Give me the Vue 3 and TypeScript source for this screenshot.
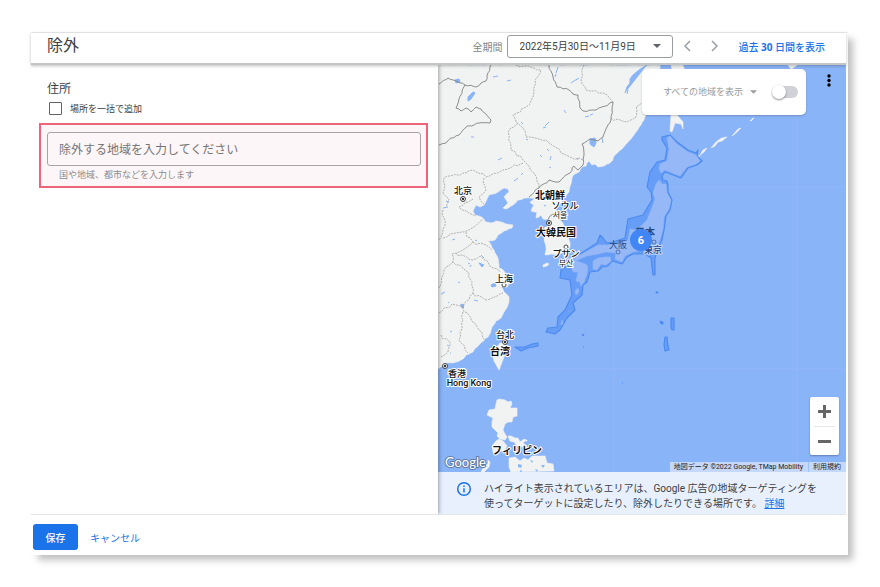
<script setup lang="ts">
import { ref } from 'vue'

interface MapLabel {
  text: string
  x: number
  y: number
  kind: 'country' | 'city' | 'small' | 'latin'
}

const bulkAdd = ref(false)
const showAll = ref(false)
const place = ref('')

const labels: MapLabel[] = [
  { text: '北京', x: 463, y: 194, kind: 'city' },
  { text: '北朝鮮', x: 550, y: 199, kind: 'country' },
  { text: 'ソウル', x: 565, y: 209, kind: 'city' },
  { text: '서울', x: 560, y: 218, kind: 'small' },
  { text: '大韓民国', x: 556, y: 236, kind: 'country' },
  { text: 'プサン', x: 566, y: 257, kind: 'city' },
  { text: '부산', x: 566, y: 266, kind: 'small' },
  { text: '上海', x: 504, y: 282, kind: 'city' },
  { text: '台北', x: 505, y: 338, kind: 'city' },
  { text: '台湾', x: 500, y: 355, kind: 'country' },
  { text: '香港', x: 457, y: 377, kind: 'city' },
  { text: 'Hong Kong', x: 469, y: 386, kind: 'latin' },
  { text: 'フィリピン', x: 517, y: 454, kind: 'country' },
]

const capitals = [[463, 199], [549, 223], [505, 342], [445, 366]]
const cities = [[566, 247], [504, 285]]

const lakes = [
  'M468 97l5-5 2 1-4 6-3 2z', 'M455 80l4-1 1 3-4 1z', 'M590 139l5-1 1 5-2 4-4-3z', 'M602 138l1 5',
  'M493 77l5-1', 'M507 81l4-1', 'M556 73l2-6M555 77l1-3', 'M571 83l6-4M576 80l3-2', 'M625 93l2-6 3-4 0-4 3-4 6-5 8-5',
  'M627 94l1-4M632 80l3-1', 'M545 126l4-4M543 128l3-1', 'M564 110l2 3', 'M585 117l4-1M590 115l3-1', 'M521 122l2 2',
  'M471 137l3 0', 'M526 139l2 1', 'M547 149l2 2M540 155l2 2', 'M550 160l1-4M549 168l2-1', 'M498 160l4-2', 'M577 158l1 2',
  'M514 181l4-3M521 175l2-2', 'M446 201l3 1M443 208l5-1', 'M479 263l5 2-2 2zM484 258l-3-3', 'M491 285l4-2 1 3-4 1z',
  'M461 304l3 1-1 3-2-1z', 'M441 294l4-2M448 302l1 1', 'M474 300l4 1M468 263l2 1', 'M450 332l2-1M447 345l2 1M450 353l1 0',
  'M452 240l3-1M475 240l2 1M458 282l2 1M470 267l1-2', 'M568 213l1 0M544 206l2-1',
]

const mainland =
  '438 65 660 65 655 85 649 100 646 115 641 125 636 132 630 140 622 149 615 155 611 162 604 166 598 167 595 164 592 165 589 161 586 166 581 168 579 172 575 174 572 178 571 184 569 192 564 198 560 204 556 209 558 215 562 222 567 232 569 240 570 247 566 253 558 254 551 254 545 255 546 247 544 240 546 233 544 228 549 225 548 219 543 219 541 215 536 218 537 212 531 211 534 205 530 202 535 198 526 198 518 200 513 205 506 209 503 208 508 203 504 197 509 192 508 189 504 188 498 192 489 195 487 199 484 205 480 207 476 205 473 211 475 215 483 218 486 222 491 223 496 221 506 224 513 225 512 228 504 231 498 235 495 240 488 241 491 245 494 250 498 258 499 268 504 271 508 277 507 281 509 284 507 287 501 287 504 292 509 297 508 305 504 312 501 318 496 321 491 330 488 337 479 345 473 352 466 355 463 359 456 362 446 363 442 366 438 369'

const provinces = [
  '516 65 525 66 541 70 535 80 533 97 526 107 513 115 516 122 523 128 526 137 546 140 561 153 570 157 583 160',
  '518 123 508 132 511 150 523 160 534 173 539 188',
  '523 163 503 170 486 177 473 170 444 178 443 193 449 199 446 207',
  '584 65 581 80 586 90 603 93 613 102',
  '611 118 626 122 636 117 636 107 643 102',
  '484 178 486 190 479 197 484 204',
  '473 199 459 207 469 213 476 216',
  '443 210 445 225 439 240',
  '443 238 456 233 469 230 483 219',
  '466 232 473 242 463 250 452 254 453 262 469 273 473 293 463 307 452 304 439 313',
  '456 253 473 260 480 256 493 268 500 272',
  '473 293 486 300 503 293',
  '463 307 479 330 485 340',
  '463 312 463 320 459 340 468 353',
  '441 335 450 342 448 352 441 357',
  '473 242 486 245 492 250',
  '453 262 444 270 439 288',
]

const borders = [
  '439 84 448 78 456 81 465 85 476 87 481 83 486 81 487 75 491 65',
  '465 85 459 99 456 108 461 111 466 108 471 112 476 107 481 109 491 120 490 123 479 123 466 127 459 135 451 138 446 143 439 145',
  '549 65 553 77 557 87 569 90 573 94 578 95 580 108 583 111 596 110 613 102 612 110 611 120 607 127 603 137 598 141 590 139 582 144 584 153 583 165 578 170 574 166 570 173 566 175 559 182 549 180 539 188 529 197',
  '548 221 550 216 560 212 563 221',
]

/* Breaks each straight run into short steps that wander around it, as a surveyed line does. */
function rugged(points: string, step: number, wander: number): string {
  const n = points.split(' ').map(Number)
  let seed = 7
  const next = () => {
    seed = (seed * 16807) % 2147483647
    return (seed / 2147483647 - 0.5) * 2 * wander
  }
  let d = `M${n[0]} ${n[1]}`
  for (let i = 2; i < n.length; i += 2) {
    const dx = n[i] - n[i - 2]
    const dy = n[i + 1] - n[i - 1]
    const parts = Math.max(1, Math.round(Math.hypot(dx, dy) / step))
    for (let p = 1; p <= parts; p++) {
      const j = p < parts ? next() : 0
      const k = p < parts ? next() : 0
      d += `L${(n[i - 2] + (dx * p) / parts + j).toFixed(1)} ${(n[i - 1] + (dy * p) / parts + k).toFixed(1)}`
    }
  }
  return d
}

const ranges = ['2022年5月30日～11月9日']
</script>

<template>
  <div class="page">
    <div class="sheet">
      <header class="top">
        <h1>除外</h1>
        <div class="period">
          <label for="range">全期間</label>
          <span class="select-box">
            <select id="range">
              <option v-for="r in ranges" :key="r">{{ r }}</option>
            </select>
            <svg class="caret" viewBox="0 0 8 4" aria-hidden="true"><path d="M0 0h8L4 4z" /></svg>
          </span>
          <button class="nav" type="button" aria-label="前へ">
            <svg viewBox="0 0 8 12"><path d="M7 1L2 6l5 5" /></svg>
          </button>
          <button class="nav next" type="button" aria-label="次へ">
            <svg viewBox="0 0 8 12"><path d="M1 1l5 5-5 5" /></svg>
          </button>
          <a class="recent" href="#">過去 <b>30</b> 日間を表示</a>
        </div>
      </header>

      <main class="body">
        <section class="form">
          <h2>住所</h2>
          <label class="bulk"><input v-model="bulkAdd" type="checkbox" />場所を一括で追加</label>
          <div class="callout">
            <input v-model="place" type="text" aria-label="除外する地域" aria-describedby="hint" placeholder="除外する地域を入力してください" />
            <p id="hint">国や地域、都市などを入力します</p>
          </div>
        </section>

        <section class="side">
          <div class="map">
            <svg class="canvas" viewBox="438 65 408 407" preserveAspectRatio="xMinYMin slice">
              <rect x="438" y="65" width="408" height="407" fill="#8ab4f8" />
              <g class="grid"><path d="M614 65V472M797 65V472M438 187H846M438 369H846" /></g>
              <g class="land">
                <path :d="rugged(mainland, 3, 0.6)" />
                <path d="M504 343L507 348 504 357 499 370 494 361 493 357 495 350 500 343z" />
                <path d="M671 65H683L686 75 682 90 679 105 677 115 683 122 683 129 681 124 675 123 672 132 670 131 671 115 674 100 676 85z" />
                <path d="M543 265l4-2 2 1-2 2-4 1zM788 65h9l-4 3-2 1z" />
                <path d="M699 157l4-7 4-2-3 4-4 3zM711 148l5-6 4-3 2-1 5-1-5 4-4 1-3 4zM732 136l6-7 3-1-5 5zM750 121l3-3 1 0-3 3z" />
                <path d="M497 400L499 399 505 400 508 402 511 401 512 404 510 408 517 408 517 416 513 417 512 422 508 422 505 424 503 430 505 434 507 437 505 440 500 439 497 436 498 433 495 430 492 427 492 422 493 418 487 415 489 410 495 409 496 404z" />
                <path d="M508 436l3 0 4 2 3 0 2 4 4-3 2 1-3 3 4 3-2 2-5-2-3 0-3-4-4-1zM525 440l2 0 0 1-2 0z" />
                <path d="M492 446l4-5 3-2 4 2 4 5-3 5-4 0-3 3-4-2z" />
                <path d="M509 458L515 457 520 461 524 458 528 460 532 456 545 456 547 463 553 464 554 471 511 472 509 467z" />
                <path d="M481 472l4-7 3-1 0-4 2 2-1 5-5 5z" />
              </g>
              <path class="inlets" d="M518 464l4 1-1 3-3-1zM530 460l3 1-1 2zM541 465l4 0-2 3zM535 469l3 1-1 2zM521 469l1 3-2 0z" />
              <g class="lakes"><path v-for="d in lakes" :key="d" :d="d" /></g>
              <g class="provinces"><path v-for="p in provinces" :key="p" :d="rugged(p, 4, 1.5)" /></g>
              <g class="borders"><path v-for="b in borders" :key="b" :d="rugged(b, 3, 0.8)" /></g>

              <g class="highlight">
                <path class="zone" d="M662 137L670 135 677 142 688 150 696 153 698 150 697 156 702 161 697 165 688 168 681 178 673 175 665 172 662 176 663 180 667 181 668 185 668 192 672 200 670 210 666 216 664 230 662 240 659 246 655 258 655 275 653 275 651 258 645 254 633 254 627 257 622 264 612 261 608 266 602 267 598 271 590 272 587 282 583 285 582 295 573 303 575 310 567 318 560 330 555 334 546 332 548 328 557 327 558 317 565 310 572 295 570 280 560 278 561 270 568 265 573 258 583 252 597 243 600 235 603 238 607 243 613 242 625 238 628 219 643 215 652 200 651 192 647 187 650 172 657 162 665 160 667 148 662 140z" />
                <path class="isle" d="M667 138L670 136 677 144 688 152 696 155 700 161 696 164 687 167 680 176 672 173 665 170 661 173 659 169 660 164 667 161 669 149z" />
                <path class="isle" d="M656 184L659 180 662 184 666 184 667 193 671 200 669 209 664 217 663 229 660 240 656 250 651 248 651 253 646 253 642 250 633 252 625 256 622 262 615 259 616 253 606 252 598 254 587 256 575 261 574 258 584 253 598 245 607 245 619 244 628 240 630 229 637 230 647 220 653 205 655 199 653 193z" />
                <path class="isle" d="M593 261l5-3 7-1 5 0 1 4-5 4-5-1-4 6-4-1zM570 262l7-1 8 3 3 2-1 8-3 8-3 4-1-4-4-1 2-9-5 0-2-6z" />
                <path class="isle" d="M575 291l3-3 1 4-3 3zM568 312l3-2M562 320l1 4-2 1z" />
                <path class="inner" d="M666 140L668 150M656 172l3-2M664 180l-1 2M598 256l5 1M589 262l-1 6M634 222l4-4" />
                <path class="zone" d="M515 347L525 347 532 344 538 343 538 346 528 348 521 351z" />
                <path class="zone" d="M671 318h3v12l-2 0-1-3zM665 337h2l1 9 1 4-4 1-1-6z" />
                <path class="dot-isles" d="M660 321l3 1 0 2-2 0zM656 292l2 0 0 1-2 0zM582 335l2-1-1 2zM583 347l1 0M622 383l1 0" />
                <g class="under-labels">
                  <text x="645" y="236" font-size="10" font-weight="700">日本</text>
                  <text x="618" y="248" font-size="9">大阪</text>
                  <text class="label city" x="653" y="253">東京</text>
                  <circle cx="618" cy="252" r="2" /><circle cx="654" cy="242" r="2" />
                </g>
              </g>

              <g class="dots">
                <g v-for="c in capitals" :key="c[0]">
                  <circle :cx="c[0]" :cy="c[1]" r="2.5" /><circle class="core" :cx="c[0]" :cy="c[1]" r="1.2" />
                </g>
                <circle v-for="c in cities" :key="c[0]" :cx="c[0]" :cy="c[1]" r="2" />
              </g>
              <text v-for="l in labels" :key="l.text" :x="l.x" :y="l.y" :class="['label', l.kind]">{{ l.text }}</text>
              <circle cx="641" cy="240" r="11" fill="#4285f4" />
              <text class="count" x="641" y="244">6</text>
              <text class="logo" x="445" y="467">Google</text>
            </svg>

            <div class="filter">
              <select aria-label="表示する地域">
                <option>すべての地域を表示</option>
              </select>
              <svg class="caret" viewBox="0 0 8 4" aria-hidden="true"><path d="M0 0h8L4 4z" /></svg>
              <input v-model="showAll" class="switch" type="checkbox" role="switch" aria-label="地域を表示" />
            </div>
            <button class="more" type="button" aria-label="その他">
              <svg viewBox="0 0 4 14"><circle cx="2" cy="2" r="1.7" /><circle cx="2" cy="6.5" r="1.7" /><circle cx="2" cy="11" r="1.7" /></svg>
            </button>
            <div class="zoom">
              <button type="button" aria-label="拡大"><svg viewBox="0 0 13 13"><path d="M6.5 0v13M0 6.5h13" /></svg></button>
              <button type="button" aria-label="縮小"><svg viewBox="0 0 13 13"><path d="M0 6.5h13" /></svg></button>
            </div>
            <div class="credit"><span>地図データ ©2022 Google, TMap Mobility</span><a href="#">利用規約</a></div>
          </div>

          <div class="info">
            <svg viewBox="0 0 16 16" aria-hidden="true">
              <circle cx="8" cy="8" r="6.3" /><path d="M8 7.2v4.3M8 4.4v1.6" />
            </svg>
            <p>ハイライト表示されているエリアは、Google 広告の地域ターゲティングを使ってターゲットに設定したり、除外したりできる場所です。 <a href="#">詳細</a></p>
          </div>
        </section>
      </main>

      <footer class="actions">
        <button class="save" type="button">保存</button>
        <button class="cancel" type="button">キャンセル</button>
      </footer>
    </div>
  </div>
</template>

<style>
body {
  background: #fff;
}
</style>

<style scoped>
* {
  box-sizing: border-box;
}
.page {
  display: flex;
  min-height: 100vh;
  padding: 32px 32px 32px 31px;
  font-family: Roboto, 'Noto Sans CJK JP', 'Noto Sans CJK KR', sans-serif;
  font-size: 10px;
  color: #3c4043;
}
button,
input,
select {
  margin: 0;
  padding: 0;
  border: 0;
  background: none;
  font: inherit;
  color: inherit;
  appearance: none;
}
h1,
h2,
p {
  margin: 0;
  font-weight: 400;
}
a {
  color: #1a73e8;
  text-decoration: none;
}
.sheet {
  flex: 1;
  display: flex;
  flex-direction: column;
  min-width: 0;
  padding-right: 2px;
  background: #fff;
  border-top: 1px solid #ececec;
  box-shadow: 6px 6px 7px -1px rgba(0, 0, 0, 0.25);
}
.top {
  position: relative;
  display: flex;
  align-items: center;
  justify-content: space-between;
  height: 32px;
  padding: 0 21px 4px 16px;
  border-bottom: 2px solid #c2c5c4;
  box-shadow: 0 1px 3px rgba(0, 0, 0, 0.25);
  z-index: 2;
}
h1 {
  font-size: 16px;
  line-height: 24px;
}
.period {
  display: flex;
  align-items: center;
}
.period label {
  color: #80868b;
  margin-right: 4px;
}
.select-box {
  display: flex;
  align-items: center;
  width: 166px;
  height: 23px;
  padding: 0 11px 0 12px;
  border: 1px solid #9a9da0;
  border-radius: 3px;
}
.select-box select {
  flex: 1;
  color: #3c4043;
}
.caret {
  width: 8px;
  height: 4px;
  fill: #5f6368;
}
.nav {
  display: flex;
  margin-left: 10px;
}
.nav.next {
  margin-left: 20px;
}
.nav svg {
  width: 8px;
  height: 12px;
  fill: none;
  stroke: #9aa0a6;
  stroke-width: 1.5;
}
.recent {
  margin-left: 20px;
  font-weight: 500;
}
.recent b {
  font-family: 'Open Sans', sans-serif;
  font-weight: 700;
}
.body {
  flex: 1;
  display: grid;
  grid-template-columns: 407fr 408fr;
}
.form {
  position: relative;
  z-index: 1;
  padding: 16px 10px 0 8px;
  background: #fff;
  box-shadow: 1px 0 4px rgba(0, 0, 0, 0.35);
  clip-path: inset(0 -6px 0 0);
}
h2 {
  padding-left: 8px;
  font-size: 12px;
  line-height: 16px;
}
.bulk {
  display: flex;
  align-items: center;
  gap: 8px;
  height: 16px;
  margin: 3px 0 7px 10px;
  font-size: 9px;
}
.bulk input {
  width: 13px;
  height: 13px;
  border: 1px solid #5f6368;
  border-radius: 1px;
}
.bulk input:checked {
  background: #1a73e8;
}
.callout {
  height: 65px;
  padding: 7px 5px 0 6px;
  border: 2px solid #ec6579;
  background: #fdf6f8;
}
.callout input {
  width: 100%;
  height: 34px;
  padding: 2px 11px 0;
  border: 1px solid #a8a3a5;
  border-radius: 3px;
  font-size: 12px;
}
.callout input::placeholder {
  color: #757575;
  opacity: 1;
}
.callout p {
  padding: 2px 12px 0;
  font-size: 9px;
  line-height: 14px;
  color: #8a8a8d;
}
.side {
  display: flex;
  flex-direction: column;
}
.map {
  position: relative;
  flex: 1;
  overflow: hidden;
  background: #8ab4f8;
}
.canvas {
  position: absolute;
  inset: 0;
  width: 100%;
  height: 100%;
}
.grid path {
  stroke: #93baf8;
  stroke-width: 0.6;
}
.land path {
  fill: #f1f2f2;
  stroke: #f1f2f2;
  stroke-width: 0.6;
  stroke-linejoin: round;
}
.inlets {
  fill: #8ab4f8;
}
.lakes path {
  fill: #8ab4f8;
  stroke: #8ab4f8;
  stroke-width: 1;
}
.provinces path {
  fill: none;
  stroke: #a0a0a0;
  stroke-width: 0.8;
  stroke-dasharray: 2 1;
}
.borders path {
  fill: none;
  stroke: #808080;
  stroke-width: 0.9;
}
.zone {
  fill: #669df6;
  stroke: #4d8bf1;
  stroke-width: 1.2;
  stroke-linejoin: round;
}
.dot-isles {
  fill: #4d8bf1;
  stroke: #4d8bf1;
  stroke-width: 1;
}
.isle {
  fill: #96b8f7;
  stroke: #96b8f7;
  stroke-width: 0.5;
  stroke-linejoin: round;
}
.inner {
  fill: none;
  stroke: #669df6;
}
.under-labels {
  fill: #27487f;
  text-anchor: middle;
}
.under-labels circle {
  fill: #9bbcf7;
  stroke: #3a5f9f;
  stroke-width: 0.8;
}
.dots circle {
  fill: #fff;
  stroke: #333;
  stroke-width: 0.9;
}
.dots .core {
  fill: #333;
  stroke: none;
}
.label {
  text-anchor: middle;
  fill: #111;
  stroke: #fff;
  stroke-width: 2px;
  stroke-linejoin: round;
  paint-order: stroke;
}
.under-labels .label {
  fill: #27487f;
  stroke: #c3d6fa;
}
.country {
  font-size: 10px;
  font-weight: 700;
}
.city {
  font-size: 9px;
  font-weight: 500;
}
.small {
  font-size: 8px;
}
.latin {
  font-size: 9px;
  font-weight: 500;
}
.count {
  fill: #fff;
  font-size: 11px;
  font-weight: 700;
  text-anchor: middle;
}
.logo {
  font-family: Lato, sans-serif;
  font-size: 13px;
  fill: #fff;
  stroke: #5f7aa6;
  stroke-width: 2px;
  stroke-linejoin: round;
  paint-order: stroke;
}
.filter {
  position: absolute;
  top: 4px;
  right: 40px;
  display: flex;
  align-items: center;
  width: 164px;
  height: 46px;
  padding: 0 8px 0 21px;
  border-radius: 5px;
  background: #fff;
  box-shadow: 0 1px 2px rgba(0, 0, 0, 0.2);
  font-size: 9px;
  color: #9a9a9a;
}
.filter select {
  width: 87px;
}
.filter .caret {
  width: 7px;
  fill: #9a9a9a;
}
.switch {
  position: relative;
  width: 25px;
  height: 12px;
  margin-left: auto;
  border-radius: 6px;
  background: #d0d2d7;
}
.switch::before {
  content: '';
  position: absolute;
  top: -1px;
  left: -1px;
  width: 14px;
  height: 14px;
  border-radius: 50%;
  background: #fff;
  box-shadow: 0 1px 2px rgba(0, 0, 0, 0.45);
}
.switch:checked::before {
  left: 12px;
}
.more {
  position: absolute;
  top: 9px;
  right: 15px;
  display: flex;
}
.more svg {
  width: 4px;
  height: 14px;
}
.zoom {
  position: absolute;
  right: 7px;
  bottom: 17px;
  width: 29px;
  padding: 0 4px;
  border-radius: 2px;
  background: #fff;
  box-shadow: 0 1px 2px rgba(0, 0, 0, 0.3);
}
.zoom button {
  display: flex;
  align-items: center;
  justify-content: center;
  width: 100%;
  height: 29px;
}
.zoom button + button {
  border-top: 1px solid #e6e6e6;
}
.zoom svg {
  width: 13px;
  height: 13px;
  stroke: #666;
  stroke-width: 3;
}
.credit {
  position: absolute;
  right: 0;
  bottom: 0;
  display: flex;
  height: 10px;
  font-size: 7px;
  line-height: 10px;
  white-space: nowrap;
  background: #c5d8fa;
}
.credit span,
.credit a {
  padding: 0 5px 0 4px;
  color: #222;
}
.credit a {
  border-left: 1px solid #9fc0f8;
}
.info {
  display: flex;
  gap: 12px;
  height: 42px;
  padding: 9px 24px 0 18px;
  background: #e8f0fe;
}
.info svg {
  flex: none;
  width: 16px;
  height: 16px;
  fill: none;
  stroke: #1a73e8;
  stroke-width: 1.5;
}
.info p {
  line-height: 15px;
}
.info a {
  text-decoration: underline;
}
.actions {
  display: flex;
  align-items: flex-start;
  gap: 12px;
  height: 41px;
  padding: 9px 2px;
  border-top: 1px solid #e2e4e6;
}
.actions button {
  height: 26px;
}
.save {
  width: 45px;
  border-radius: 3px;
  background: #1a73e8;
  color: #fff;
  font-weight: 500;
}
.cancel {
  color: #1a73e8;
}
</style>
